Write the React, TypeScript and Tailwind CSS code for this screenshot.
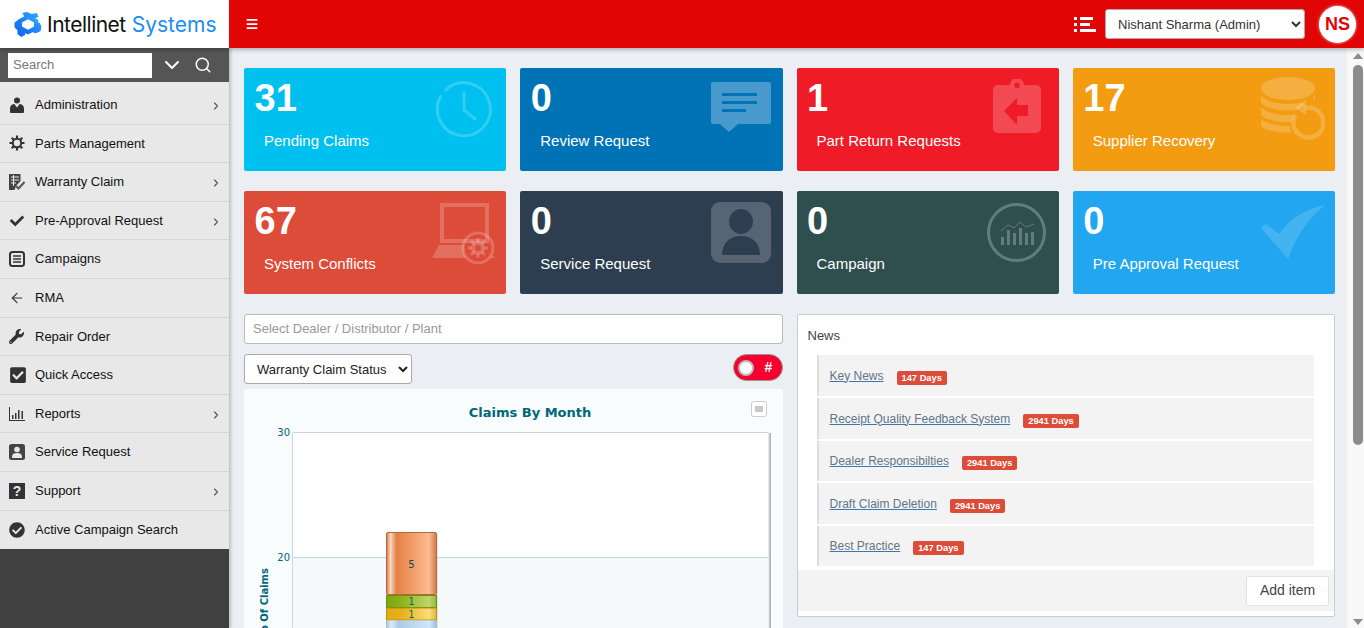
import { ChevronDown, ChevronRight, Search, ArrowLeft, Menu } from "lucide-react";
import { FaCheck, FaCheckCircle, FaCheckSquare, FaWrench } from "react-icons/fa";
import type { ReactNode } from "react";

const AdminIcon = () => (
  <svg viewBox="0 0 16 16" className="h-4 w-4 fill-[#333]">
    <circle cx="8" cy="3.4" r="3" />
    <path d="M1 15v-3.5C1 8.6 3.2 7 5.4 7L8 10.6 10.6 7C12.8 7 15 8.6 15 11.5V15a1 1 0 0 1-1 1H2a1 1 0 0 1-1-1z" />
  </svg>
);
const GearIcon = () => (
  <svg viewBox="0 0 16 16" className="h-4 w-4 fill-none stroke-[#333]">
    <circle cx="8" cy="8" r="4.2" strokeWidth="2" />
    <path strokeWidth="2.2" d="M8 .5v3M8 12.5v3M.5 8h3M12.5 8h3M2.7 2.7l2.1 2.1M11.2 11.2l2.1 2.1M2.7 13.3l2.1-2.1M11.2 4.8l2.1-2.1" />
  </svg>
);
const ClaimIcon = () => (
  <svg viewBox="0 0 16 16" className="h-4 w-4">
    <path fill="#444" d="M0 0h11.5v7L7 12l-1.5 4H0z" />
    <path stroke="#e8e8e8" strokeWidth="1" d="M2 3h8M2 6h8M2 9h5M4.500 1v11" />
    <path fill="none" stroke="#555" strokeWidth="2" d="M7 12l2.500 2.500L15.500 8" />
  </svg>
);
const ListBoxIcon = () => (
  <svg viewBox="0 0 16 16" className="h-4 w-4 fill-none stroke-[#333]">
    <rect x="1" y="1" width="14" height="14" rx="2.500" strokeWidth="2" />
    <path strokeWidth="1.500" d="M4 5h8M4 8h8M4 11h8" />
  </svg>
);
const BarsIcon = () => (
  <svg viewBox="0 0 16 16" className="h-4 w-4 fill-[#333]">
    <path d="M0 1h1v13h15v1H0zM3 9h1.500v4H3zM6 7h1.500v6H6zM9 4h1.500v9H9zM12.500 5H14v8h-1.500z" />
  </svg>
);
const ContactIcon = () => (
  <svg viewBox="0 0 16 16" className="h-4 w-4">
    <rect width="16" height="16" rx="2.500" fill="#444" />
    <circle cx="8" cy="5.500" r="2.800" fill="#e8e8e8" />
    <path fill="#e8e8e8" d="M3 14v-1.500C3 10 5 9 8 9s5 1 5 3.500V14z" />
  </svg>
);
const HelpIcon = () => (
  <span className="flex h-4 w-4 items-center justify-center bg-[#333] text-[14px] font-bold leading-none text-[#e8e8e8]">?</span>
);

const navItems: { label: string; icon: ReactNode; sub?: boolean }[] = [
  { label: "Administration", icon: <AdminIcon />, sub: true },
  { label: "Parts Management", icon: <GearIcon /> },
  { label: "Warranty Claim", icon: <ClaimIcon />, sub: true },
  { label: "Pre-Approval Request", icon: <FaCheck className="h-[14px] w-4 text-[#333]" />, sub: true },
  { label: "Campaigns", icon: <ListBoxIcon /> },
  { label: "RMA", icon: <ArrowLeft className="h-4 w-4 text-[#333]" strokeWidth={1.75} /> },
  { label: "Repair Order", icon: <FaWrench className="h-[15px] w-[15px] text-[#333]" /> },
  { label: "Quick Access", icon: <FaCheckSquare className="h-[18px] w-[18px] text-[#333]" /> },
  { label: "Reports", icon: <BarsIcon />, sub: true },
  { label: "Service Request", icon: <ContactIcon /> },
  { label: "Support", icon: <HelpIcon />, sub: true },
  { label: "Active Campaign Search", icon: <FaCheckCircle className="h-4 w-4 text-[#333]" /> },
];

const ClockArt = () => (
  <svg viewBox="0 0 56 56" className="h-[56px] w-[56px] fill-none stroke-white/20" strokeWidth="3" strokeLinecap="round">
    <path d="M4.600 15.500A26.500 26.500 0 1 0 9.600 9" />
    <path d="M28 12v17l11 9" />
  </svg>
);
const ChatArt = () => (
  <svg viewBox="0 0 60 50" className="h-[50px] w-[60px]">
    <path fill="#fff" fillOpacity=".28" fillRule="evenodd" d="M2 0h56a2 2 0 0 1 2 2v38a2 2 0 0 1-2 2H27l-9 8-9-8H2a2 2 0 0 1-2-2V2a2 2 0 0 1 2-2zM11 11v3h35v-3zM11 19v3h35v-3zM11 27v3h24v-3z" />
  </svg>
);
const ClipboardArt = () => (
  <svg viewBox="0 0 48 54" className="h-[54px] w-[48px]">
    <path fill="#fff" fillOpacity=".2" fillRule="evenodd" d="M5 6h12a7 7 0 0 1 14 0h12a5 5 0 0 1 5 5v38a5 5 0 0 1-5 5H5a5 5 0 0 1-5-5V11a5 5 0 0 1 5-5zM24 3.500a2.800 2.800 0 1 0 0 5.600 2.800 2.800 0 0 0 0-5.600zM11 32l13 14V37h11V26H24V19z" />
  </svg>
);
const DbArt = () => (
  <svg viewBox="0 0 64 64" className="h-[64px] w-[64px]">
    <g fill="#fff" fillOpacity=".2">
      <ellipse cx="27" cy="11.500" rx="27" ry="11.500" />
      <path d="M0 18c4 6 15 9 27 9 5 0 10-.5 14-1.500l2 2-7 5.500c-3 .5-6 .5-9 .5C14 33.500 4 30 0 26zM0 30c4 5 15 8 27 8h6l-2 5-1 2h-3C14 45 4 42 0 38zM0 42c4 4 15 7 27 7h2l1 6.500C14 55.500 0 53 0 47zM54 17v7l-2-3z" />
    </g>
    <path fill="none" stroke="#fff" strokeOpacity=".2" strokeWidth="4.500" d="M44 31a15 15 0 1 1-9.500 7" />
    <path fill="#fff" fillOpacity=".2" d="M45 23v15l-11-7z" />
  </svg>
);
const MonitorArt = () => (
  <svg viewBox="0 0 64 61" className="h-[61px] w-[64px]">
    <path fill="none" stroke="#fff" strokeOpacity=".2" strokeWidth="4" d="M10 2h45v36H10z" />
    <path fill="#fff" fillOpacity=".2" d="M7 42h25c-1 5 0 10 2 13H0zM59 52l5 3h-5z" />
    <circle cx="46" cy="45" r="15" fill="none" stroke="#fff" strokeOpacity=".2" strokeWidth="3" />
    <circle cx="46" cy="45" r="5" fill="none" stroke="#fff" strokeOpacity=".2" strokeWidth="4" />
    <path stroke="#fff" strokeOpacity=".2" strokeWidth="3" d="M46 35v4M46 51v4M36 45h4M52 45h4M39 38l3 3M50 49l3 3M39 52l3-3M50 41l3-3" />
  </svg>
);
const PersonArt = () => (
  <svg viewBox="0 0 60 61" className="h-[61px] w-[60px]">
    <path fill="#fff" fillOpacity=".2" fillRule="evenodd" d="M9 0h42a9 9 0 0 1 9 9v43a9 9 0 0 1-9 9H9a9 9 0 0 1-9-9V9a9 9 0 0 1 9-9zM30 7a12 12.500 0 1 0 0 25 12 12.500 0 0 0 0-25zM11 53h38c0-12-8-19-19-19s-19 7-19 19z" />
  </svg>
);
const ChartArt = () => (
  <svg viewBox="0 0 59 59" className="h-[59px] w-[59px] fill-none">
    <circle cx="29.500" cy="29.500" r="28" stroke="#fff" strokeOpacity=".25" strokeWidth="3" />
    <path stroke="#fff" strokeOpacity=".25" d="M14 28l7-6 6 3 6-6 6 5 8-3" />
    <path stroke="#fff" strokeOpacity=".25" strokeWidth="3" d="M15.500 42V34M21.500 42V27M27.500 42V30M33.500 42V25M39.500 42V30M45.500 42V29" />
  </svg>
);
const CheckArt = () => (
  <svg viewBox="0 0 64 54" className="h-[54px] w-[64px]">
    <path fill="#fff" fillOpacity=".15" d="M0 23l5-4 13 10C28 15 43 4 64 0 47 14 35 31 27 54z" />
  </svg>
);

const cards = [
  { count: "31", label: "Pending Claims", bg: "bg-[#00c0ef]", art: <ClockArt />, place: "top-[13px] right-[14px]" },
  { count: "0", label: "Review Request", bg: "bg-[#0073b7]", art: <ChatArt />, place: "top-[14px] right-[12px]" },
  { count: "1", label: "Part Return Requests", bg: "bg-[#ef1c27]", art: <ClipboardArt />, place: "top-[11px] right-[18px]" },
  { count: "17", label: "Supplier Recovery", bg: "bg-[#f39c12]", art: <DbArt />, place: "top-[9px] right-[10px]" },
  { count: "67", label: "System Conflicts", bg: "bg-[#dd4b39]", art: <MonitorArt />, place: "top-[12px] right-[10px]" },
  { count: "0", label: "Service Request", bg: "bg-[#2c3e50]", art: <PersonArt />, place: "top-[11px] right-[12px]" },
  { count: "0", label: "Campaign", bg: "bg-[#2f4f4f]", art: <ChartArt />, place: "top-[12px] right-[13px]" },
  { count: "0", label: "Pre Approval Request", bg: "bg-[#23a6f0]", art: <CheckArt />, place: "top-[14px] right-[10px]" },
];

const news = [
  { title: "Key News", days: "147 Days", h: "h-[41px]" },
  { title: "Receipt Quality Feedback System", days: "2941 Days", h: "h-[41px]" },
  { title: "Dealer Responsibilties", days: "2941 Days", h: "h-[40px]" },
  { title: "Draft Claim Deletion", days: "2941 Days", h: "h-[41px]" },
  { title: "Best Practice", days: "147 Days", h: "h-[40px]" },
];

const ClaimsChart = () => (
  <svg width="539" height="239" className="block" style={{ fontFamily: "'DejaVu Sans', sans-serif" }}>
    <defs>
      <linearGradient id="orange" x1="0" x2="1" y1="0" y2="0">
        <stop offset="0" stopColor="#d9753f" />
        <stop offset="0.08" stopColor="#f6d9c6" />
        <stop offset="0.2" stopColor="#e67f45" />
        <stop offset="0.85" stopColor="#fdbb90" />
        <stop offset="1" stopColor="#cf7a48" />
      </linearGradient>
      <linearGradient id="green" x1="0" x2="1" y1="0" y2="0">
        <stop offset="0" stopColor="#7ba80f" />
        <stop offset="0.3" stopColor="#8db21c" />
        <stop offset="0.85" stopColor="#bdd86d" />
        <stop offset="1" stopColor="#94b53a" />
      </linearGradient>
      <linearGradient id="yellow" x1="0" x2="1" y1="0" y2="0">
        <stop offset="0" stopColor="#e0ac12" />
        <stop offset="0.3" stopColor="#e5b21c" />
        <stop offset="0.85" stopColor="#fbdc78" />
        <stop offset="1" stopColor="#dcb840" />
      </linearGradient>
      <linearGradient id="blue" x1="0" x2="1" y1="0" y2="0">
        <stop offset="0" stopColor="#9dbfdc" />
        <stop offset="0.1" stopColor="#dcebf7" />
        <stop offset="0.25" stopColor="#a9cbe8" />
        <stop offset="0.85" stopColor="#cfe6fa" />
        <stop offset="1" stopColor="#9dbcd8" />
      </linearGradient>
    </defs>
    <text x="286" y="28" textAnchor="middle" fontSize="13" fontWeight="700" fill="#00667a">Claims By Month</text>
    <rect x="507.500" y="12.500" width="15" height="15" rx="2" fill="#fff" stroke="#ccc" />
    <rect x="511" y="17" width="8" height="6" fill="#c8c8c8" />
    <text x="46" y="47" textAnchor="end" fontSize="10" fill="#00667a">30</text>
    <text x="46" y="172" textAnchor="end" fontSize="10" fill="#00667a">20</text>
    <text transform="translate(24 179) rotate(-90)" fontSize="10" fontWeight="700" fill="#00667a" textAnchor="end">No Of Claims</text>
    <rect x="50" y="44" width="477" height="195" fill="#b5b5b5" />
    <rect x="48.500" y="43.500" width="476.500" height="196" rx="1" fill="#fff" stroke="#ccd6d8" />
    <rect x="49" y="168" width="475.500" height="71" fill="#f5f9fa" />
    <path d="M49 168.500h475.500" stroke="#c0dce2" />
    <rect x="144" y="145" width="50" height="94" fill="#000" fillOpacity=".08" />
    <rect x="142.500" y="143.500" width="50" height="62" rx="1.500" fill="url(#orange)" stroke="#b9673a" />
    <rect x="142.500" y="206.500" width="50" height="12" fill="url(#green)" stroke="#6d8c12" />
    <rect x="142.500" y="219" width="50" height="12" fill="url(#yellow)" stroke="#b88f10" />
    <rect x="142" y="231.500" width="51" height="8" fill="url(#blue)" />
    <text x="167.500" y="179" textAnchor="middle" fontSize="10" fill="#0d4a5a">5</text>
    <text x="167.500" y="216" textAnchor="middle" fontSize="10" fill="#0d6a5a">1</text>
    <text x="167.500" y="229" textAnchor="middle" fontSize="10" fill="#0d6a5a">1</text>
  </svg>
);

export default function App() {
  return (
    <div className="flex h-[628px] w-[1364px] flex-col overflow-hidden bg-[#ebeef3] font-['Liberation_Sans',Arial,sans-serif] text-[13px] text-[#222]">
      <header className="z-10 flex h-[48px] shrink-0 shadow-[0_2px_4px_rgba(0,0,0,0.25)]">
        <div className="flex w-[229px] items-center bg-white pl-[14px]">
          <svg viewBox="0 0 28 26" className="h-[25px] w-[28px]">
            <defs>
              <linearGradient id="logo" x1="0" x2="1" y1="1" y2="0">
                <stop offset="0" stopColor="#0a62ee" />
                <stop offset="1" stopColor="#35a8ff" />
              </linearGradient>
            </defs>
            <path fill="none" stroke="url(#logo)" strokeWidth="4.500" strokeLinejoin="round" d="M14 5l8.500 4.500v7L14 21l-8.500-4.500v-7z" />
            <path fill="url(#logo)" d="M8 1l5-1 5 2 5-1 2 4-5 2-4-2-5 1zM0 11l4-3 3 3v5l4 3v5l-4 2-4-3v-4l-3-3zM22 13l4-2 2 4-1 5-5 2-3-1v-4z" />
          </svg>
          <span className="ml-[5px] font-['Inter',sans-serif] text-[21px] font-normal leading-none tracking-[-0.5px] text-[#111]">Intellinet</span>
          <span className="ml-[6px] font-['Inter',sans-serif] text-[21px] font-normal leading-none text-[#1a8cf5]">Systems</span>
        </div>
        <div className="flex flex-1 items-center bg-[#e10505] text-white">
          <Menu className="ml-[16px] h-[14px] w-[14px]" strokeWidth={3} />
          <div className="ml-auto flex flex-col gap-[3px]">
            <div className="flex items-center gap-[3px]"><span className="h-[3px] w-[3px] bg-white" /><span className="h-[3px] w-[13px] bg-white" /></div>
            <div className="flex items-center gap-[3px]"><span className="h-[3px] w-[3px] bg-white" /><span className="h-[3px] w-[10px] bg-white" /></div>
            <div className="flex items-center gap-[3px]"><span className="h-[3px] w-[3px] bg-white" /><span className="h-[3px] w-[16px] bg-white" /></div>
          </div>
          <select className="ml-[9px] h-[30px] w-[200px] rounded-[3px] border border-[#aaa] bg-white pl-[8px] text-[13px] text-[#333]" defaultValue="ns">
            <option value="ns">Nishant Sharma (Admin)</option>
          </select>
          <div className="ml-[14px] mr-[8px] flex h-[37px] w-[37px] items-center justify-center rounded-full bg-white text-[18px] font-bold text-[#e10505] shadow-[0_0_3px_rgba(255,255,255,0.8)]">NS</div>
        </div>
      </header>
      <div className="flex min-h-0 flex-1">
        <aside className="flex w-[229px] shrink-0 flex-col bg-[#404040] shadow-[2px_0_3px_rgba(0,0,0,0.2)]">
          <div className="flex h-[34px] items-center bg-[#555] pl-[8px] text-white">
            <div className="flex h-[25px] w-[144px] items-center bg-white pl-[5px] text-[13px] text-[#777]">Search</div>
            <ChevronDown className="ml-[8px] h-[24px] w-[24px]" strokeWidth={2} />
            <Search className="ml-[10px] h-[18px] w-[18px]" strokeWidth={2} />
          </div>
          <nav className="bg-[#e8e8e8] pt-[4px]">
            {navItems.map((item, i) => (
              <div
                key={item.label}
                className={`flex h-[38.6px] items-center pl-[9px] pr-[7px] text-[#111] ${i < navItems.length - 1 ? "border-b border-dotted border-[#c4c4c4]" : ""}`}
              >
                <span className="flex w-[26px] shrink-0 items-center">{item.icon}</span>
                <span className="text-[13px]">{item.label}</span>
                {item.sub && <ChevronRight className="ml-auto mt-[2px] h-[12px] w-[12px] text-[#555]" strokeWidth={2.25} />}
              </div>
            ))}
          </nav>
        </aside>
        <main className="min-w-0 flex-1 overflow-hidden pl-[15px] pr-[12px] pt-[20px]">
          <div className="grid grid-cols-4 gap-x-[14px] gap-y-[20px]">
            {cards.map((card) => (
              <div key={card.label} className={`relative h-[103px] rounded-[2px] px-[10.500px] pt-[9px] text-white ${card.bg}`}>
                <div className="text-[38px] font-bold leading-[42px]">{card.count}</div>
                <div className="mt-[12px] pl-[9.500px] text-[15px] leading-[20px]">{card.label}</div>
                <div className={`absolute ${card.place}`}>{card.art}</div>
              </div>
            ))}
          </div>
          <div className="mt-[20px] grid grid-cols-2 gap-x-[14px]">
            <div>
              <div className="flex h-[30px] items-center rounded-[3px] border border-[#bbb] bg-white pl-[8px] text-[13px] text-[#999]">Select Dealer / Distributor / Plant</div>
              <div className="mt-[10px] flex items-start justify-between">
                <select className="h-[30px] w-[168px] rounded-[3px] border border-[#aaa] bg-white pl-[8px] text-[13px] text-[#222]" defaultValue="w">
                  <option value="w">Warranty Claim Status</option>
                </select>
                <div className="flex h-[27px] w-[50px] items-center rounded-[14px] border border-[#999] bg-[#f5002f] pl-[4px]">
                  <span className="h-[16px] w-[16px] rounded-full border-2 border-[#bbb] bg-white" />
                  <span className="ml-[11px] text-[14px] font-bold text-white">#</span>
                </div>
              </div>
              <div className="mt-[5px] h-[239px] overflow-hidden bg-[#f9fcfd]">
                <ClaimsChart />
              </div>
            </div>
            <div className="flex h-[303px] flex-col rounded-[2px] border border-[#ccc] bg-white pb-[5px]">
              <div className="pl-[10px] pt-[12px] text-[13px] leading-[18px] text-[#444]">News</div>
              <ul className="ml-[19px] mr-[20px] mt-[10px] flex flex-col gap-[2px]">
                {news.map((n) => (
                  <li key={n.title} className={`flex items-center border-l-2 border-[#ddd] bg-[#f3f3f3] pl-[11px] ${n.h}`}>
                    <span className="text-[12px] text-[#5f7688] underline decoration-[#337ab7]">{n.title}</span>
                    <span className="ml-[13px] mt-[4px] rounded-[2px] bg-[#dd4b39] px-[5px] text-[9.300px] font-bold leading-[14px] text-white">{n.days}</span>
                  </li>
                ))}
              </ul>
              <div className="mt-auto flex h-[41px] items-center justify-end bg-[#f3f3f3] pr-[5px]">
                <div className="flex h-[30px] w-[83px] items-center justify-center rounded-[2px] border border-[#e3e3e3] bg-white text-[14px] text-[#444]">Add item</div>
              </div>
            </div>
          </div>
        </main>
        <div className="flex w-[17px] shrink-0 flex-col items-center bg-[#f8f8f8] pl-[4px] pt-[5px]">
          <span className="h-0 w-0 border-x-[5px] border-b-[6px] border-x-transparent border-b-[#8c8c8c]" />
          <span className="mt-[6px] h-[380px] w-[10px] rounded-[5px] bg-[#8c8c8c]" />
          <span className="mb-[3px] mt-auto h-0 w-0 border-x-[5px] border-t-[6px] border-x-transparent border-t-[#8c8c8c]" />
        </div>
      </div>
    </div>
  );
}
